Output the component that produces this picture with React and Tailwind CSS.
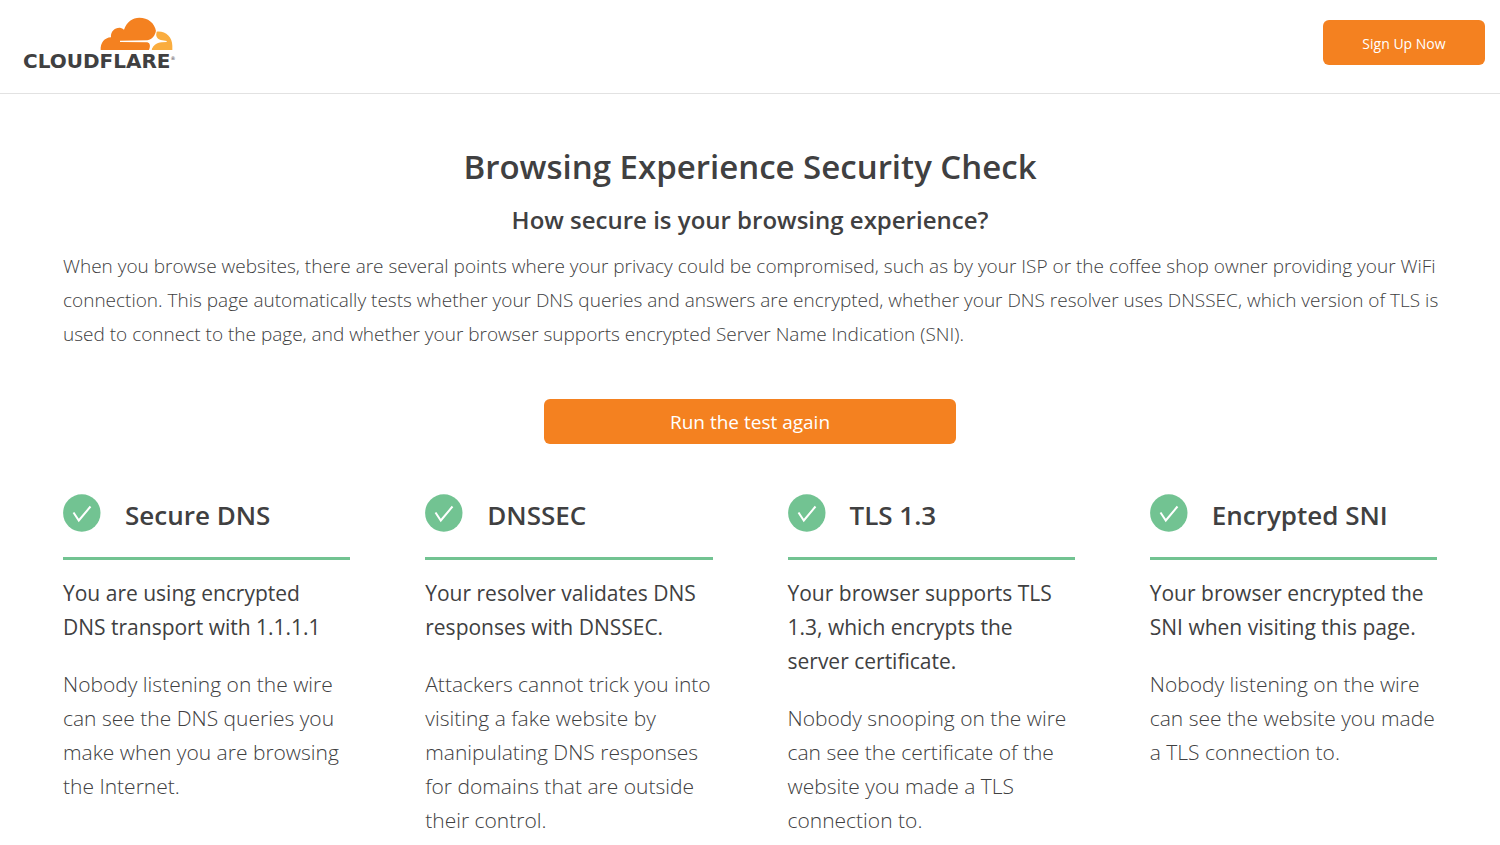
import React from 'react';

const checks = [
  {
    title: 'Secure DNS',
    result: 'You are using encrypted DNS transport with 1.1.1.1',
    detail: 'Nobody listening on the wire can see the DNS queries you make when you are browsing the Internet.',
  },
  {
    title: 'DNSSEC',
    result: 'Your resolver validates DNS responses with DNSSEC.',
    detail: 'Attackers cannot trick you into visiting a fake website by manipulating DNS responses for domains that are outside their control.',
  },
  {
    title: 'TLS 1.3',
    result: 'Your browser supports TLS 1.3, which encrypts the server certificate.',
    detail: 'Nobody snooping on the wire can see the certificate of the website you made a TLS connection to.',
  },
  {
    title: 'Encrypted SNI',
    result: 'Your browser encrypted the SNI when visiting this page.',
    detail: 'Nobody listening on the wire can see the website you made a TLS connection to.',
  },
];

function Logo() {
  return (
    <a href="#home" aria-label="Cloudflare" className="flex flex-col items-end">
      <svg viewBox="270 36 219 102" className="w-[73px] h-[34px] mr-[3px]" aria-hidden="true">
        <path fill="#f48120" d="M272 135C271 114 283 98 303 97C301 79 315 67 330 68C335 69 339 71 342 74C350 50 368 38 388 38C414 38 434 54 438 78L436 108L418 135Z" />
        <path fill="#faad3f" d="M440 80C466 77 487 96 487 122V135H424L436 106Z" />
        <path fill="#fff" d="M437 76C437 96 442 103 452 105L470 108V111L455 112C440 113 427 122 424 138H416C422 125 421 114 412 112L330 111V107L412 106C428 103 436 92 437 76Z" />
      </svg>
      <span className="flex items-start font-['DejaVu_Sans'] text-[#404041]">
        <span className="text-[20px] leading-[20px] font-bold">CLOUDFLARE</span>
        <span className="text-[5px] leading-[14px]">®</span>
      </span>
    </a>
  );
}

function CheckIcon() {
  return (
    <svg viewBox="0 0 38 38" className="w-[38px] h-[38px] shrink-0" fill="none" aria-hidden="true">
      <circle cx="18.8" cy="19" r="18.7" fill="#72c392" />
      <path d="M10.5 18.5L15.8 26.5L27.5 12.5" stroke="#fff" strokeWidth="2" />
    </svg>
  );
}

function CheckCard({ title, result, detail }) {
  return (
    <section>
      <div className="flex items-start gap-6 h-[66px] border-b-3 border-[#72c392]">
        <CheckIcon />
        <h3 className="text-[26px] leading-[42px] font-semibold whitespace-nowrap">{title}</h3>
      </div>
      <p className="mt-4 pr-2 text-[21px] leading-[34px]">{result}</p>
      <p className="mt-[23px] text-[21px] leading-[34px] font-light">{detail}</p>
    </section>
  );
}

export default function App() {
  return (
    <div className="min-h-screen bg-white text-[#404041] font-['Open_Sans','Noto_Sans',sans-serif]">
      <header className="flex items-start justify-between pt-[17px] pb-[22px] pl-[23px] pr-[15px] border-b border-[#e2e2e2]">
        <Logo />
        <button type="button" className="mt-[3px] w-[162px] h-[45px] pt-0.5 rounded-md bg-[#f48120] text-white text-sm">
          Sign Up Now
        </button>
      </header>

      <main className="px-[63px] pt-12">
        <div className="text-center">
          <h1 className="text-[33px] leading-[49px] font-semibold">Browsing Experience Security Check</h1>
          <h2 className="mt-3 text-[24px] leading-[34px] font-semibold">How secure is your browsing experience?</h2>
        </div>
        <p className="mt-3 -mr-2 text-[19px] leading-[34px] font-light">
          When you browse websites, there are several points where your privacy could be compromised, such as by your ISP
          or the coffee shop owner providing your WiFi connection. This page automatically tests whether your DNS queries
          and answers are encrypted, whether your DNS resolver uses DNSSEC, which version of TLS is used to connect to the
          page, and whether your browser supports encrypted Server Name Indication (SNI).
        </p>

        <div className="mt-12 flex justify-center">
          <button type="button" className="w-[412px] h-[45px] pt-0.5 rounded-md bg-[#f48120] text-white text-[19px]">
            Run the test again
          </button>
        </div>

        <div className="mt-[50px] grid grid-cols-4 gap-x-[75px]">
          {checks.map((check) => (
            <CheckCard key={check.title} {...check} />
          ))}
        </div>
      </main>
    </div>
  );
}
